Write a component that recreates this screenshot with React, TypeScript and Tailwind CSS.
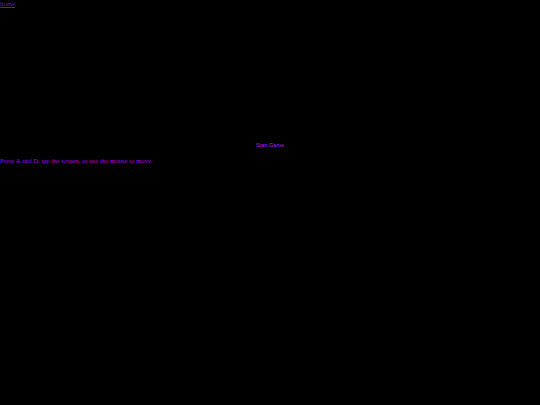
export default function App() {
  return (
    <div className="min-h-[405px] w-full bg-black font-['Liberation_Serif',serif] text-[6.75px] leading-[8px] text-[#a000e0]">
      <a href="#" className="block w-fit font-['Liberation_Serif',serif] text-[#6a1aa0] underline">home</a>
      <div className="h-[134px]" />
      <div className="flex justify-center">
        <button className="font-['Liberation_Sans',sans-serif] text-[5.5px] leading-[7px] text-[#b020f0]">Start Game</button>
      </div>
      <p className="mt-[8px] font-['Liberation_Serif',serif]">Press A and D, tap the screen, or use the mouse to move.</p>
    </div>
  )
}
